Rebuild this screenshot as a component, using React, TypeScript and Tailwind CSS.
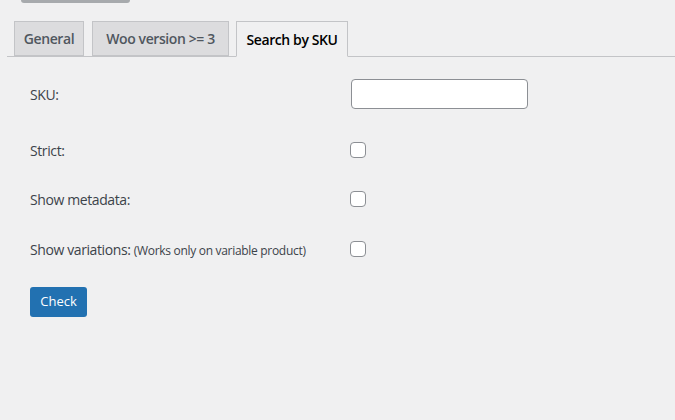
import React from "react";

const tabs = [
  { label: "General", width: "w-[70px]", active: false },
  { label: "Woo version >= 3", width: "w-[137px]", active: false },
  { label: "Search by SKU", width: "w-[112px]", active: true },
];

const Checkbox = () => (
  <span className="block w-4 h-4 rounded-[4px] border border-[#8c8f94] bg-white" />
);

const App = () => {
  return (
    <div
      className="w-[675px] h-[420px] bg-[#f0f0f1] text-[#1d2327] overflow-hidden"
      style={{ fontFamily: '"Segoe UI", "Open Sans", "Liberation Sans", sans-serif' }}
    >
      <div className="ml-[21px] w-[109px] h-[3px] rounded-b-[3px] bg-[#a7aaad]" />

      {/* tabs */}
      <div className="mt-[18px] ml-[7px] flex items-end border-b border-[#c3c4c7] h-[36px]">
        {tabs.map((tab, i) => (
          <div
            key={i}
            className={`${tab.width} ${i === 1 ? "ml-[8px]" : "ml-[7px]"} ${
              tab.active
                ? "bg-[#f0f0f1] text-black border-b-[#f0f0f1] -mb-px h-[36px]"
                : "bg-[#dcdcde] text-[#50575e] h-[35px]"
            } border border-[#c3c4c7] flex items-center justify-center text-[14px] font-semibold tracking-[-0.4px]`}
          >
            {tab.label}
          </div>
        ))}
      </div>

      {/* form */}
      <div className="pl-[30px] text-[14px] text-[#3c434a] tracking-[-0.4px]">
        <div className="mt-[22px] flex items-center h-[30px]">
          <label className="w-[321px]">SKU:</label>
          <input
            type="text"
            className="w-[177px] h-[30px] rounded-[4px] border border-[#8c8f94] bg-white"
          />
        </div>
        <div className="mt-[26px] flex items-center h-[30px]">
          <label className="w-[320px]">Strict:</label>
          <Checkbox />
        </div>
        <div className="mt-[19px] flex items-center h-[30px]">
          <label className="w-[320px]">Show metadata:</label>
          <Checkbox />
        </div>
        <div className="mt-[20px] flex items-center h-[30px]">
          <label className="w-[320px]">
            Show variations: <span className="text-[12px] tracking-[-0.3px]">(Works only on variable product)</span>
          </label>
          <Checkbox />
        </div>
        <button className="mt-[23px] w-[57px] h-[30px] rounded-[3px] bg-[#2271b1] text-white text-[13px] tracking-normal">
          Check
        </button>
      </div>
    </div>
  );
};

export default App;
